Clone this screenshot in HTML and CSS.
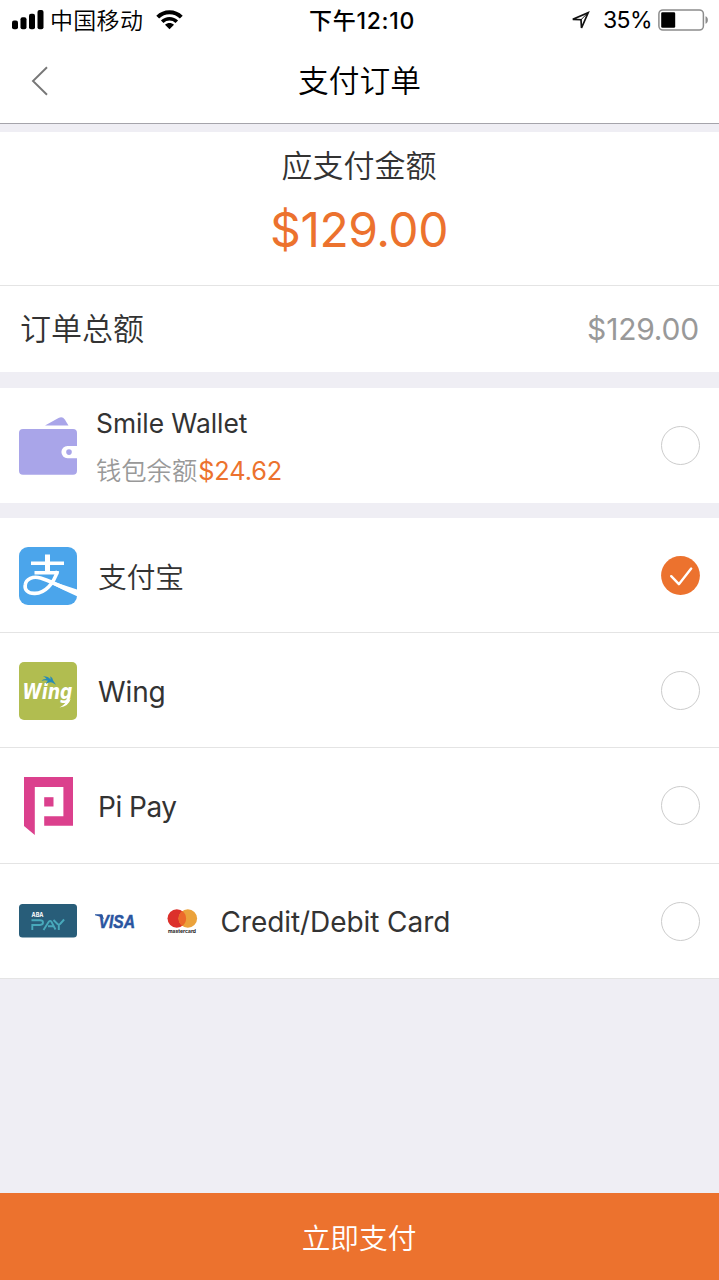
FILE: index.html
```html
<!DOCTYPE html>
<html lang="zh-CN">
<head>
<meta charset="utf-8">
<title>支付订单</title>
<link rel="stylesheet" href="styles.css">
</head>
<body>
<div class="screen">
  <header class="header">
    <div class="status">
      <div class="status-left">
        <svg class="signal" width="33" height="20" viewBox="0 0 33 20"><rect x="0" y="10.5" width="6" height="8.8" rx="2"/><rect x="8.5" y="7.2" width="6" height="12.1" rx="2"/><rect x="17" y="3.7" width="6" height="15.6" rx="2"/><rect x="25.5" y="0" width="6" height="19.3" rx="2"/></svg>
        <span class="carrier">中国移动</span>
        <svg class="wifi" width="27" height="20" viewBox="0 0 27 20"><path d="M1.7 7.1C8.3.5 18.7.5 25.3 7.1" fill="none" stroke="#000" stroke-width="4"/><path d="M6.2 11.7c4.1-4 10.5-4 14.6 0" fill="none" stroke="#000" stroke-width="3.6"/><path d="M13.5 19.2 9 14.7c2.5-2.4 6.5-2.4 9 0z"/></svg>
      </div>
      <span class="time">下午12:10</span>
      <div class="status-right">
        <svg width="19" height="19" viewBox="0 0 19 19"><path d="M1.8 8.3 17.2 1.6 10.5 17 10 8.7Z" fill="none" stroke="#111" stroke-width="1.7"/><path d="M10 8.7 17.2 1.6" stroke="#111" stroke-width="1"/></svg>
        <span class="percent">35%</span>
        <svg class="battery" width="51" height="22" viewBox="0 0 51 22"><rect x=".9" y=".9" width="44.5" height="20.2" rx="4" fill="none" stroke="#8c8c8c" stroke-width="1.5"/><rect x="3.2" y="3.2" width="14" height="15.5" rx="1.3"/><path d="M47.5 7.2c3.2 1.2 3.2 6.4 0 7.6z" fill="#8c8c8c"/></svg>
      </div>
    </div>
    <nav class="nav">
      <svg class="back" width="18" height="30" viewBox="0 0 18 30"><path d="M16 1.2 2 15l14 13.8" fill="none" stroke="#777" stroke-width="1.9"/></svg>
      <h1 class="title">支付订单</h1>
      <span></span>
    </nav>
  </header>

  <section class="due">
    <div class="due-label">应支付金额</div>
    <div class="due-amount">$129.00</div>
  </section>
  <section class="total">
    <span class="total-label">订单总额</span>
    <span class="total-amount">$129.00</span>
  </section>

  <section class="wallet">
    <svg width="58" height="58" viewBox="0 0 58 58"><path d="M26 8.500 39.500 1.100q4-2 6.300 1.500L49.500 8.500z" fill="#a9a5e9"/><path d="M4 12h50q4 0 4 4v13H48.500a6 6 0 0 0 0 12.200H58V53.700q0 4-4 4H4q-4 0-4-4V16q0-4 4-4z" fill="#a9a5e9"/><circle cx="50" cy="35.100" r="2.800" fill="#a9a5e9"/></svg>
    <div class="wallet-text">
      <div class="wallet-name">Smile Wallet</div>
      <div class="wallet-balance"><span class="balance-label">钱包余额</span><span class="balance">$24.62</span></div>
    </div>
    <span class="radio"></span>
  </section>

  <section class="methods">
    <div class="method">
      <svg width="58" height="58" viewBox="0 0 58 58"><rect width="58" height="58" rx="9" fill="#4ba5eb"/><path d="M12 16.2h33M15.5 25.8h24" fill="none" stroke="#fff" stroke-width="3.6"/><path d="M28.5 7.5v18" stroke="#fff" stroke-width="5"/><path d="M38.500 24C34.500 37 26 46 16 46.400C8.500 46.700 5.500 42.500 6.200 38C7 31.500 14 29 21.500 31C32 34 43 41 58 45.600" fill="none" stroke="#fff" stroke-width="3.600"/><path d="M33 34.200 58 42.500v6.800Q44 43 31.500 36.500z" fill="#fff"/></svg>
      <span class="name name-zh">支付宝</span>
      <svg class="check" width="39" height="39" viewBox="0 0 39 39"><circle cx="19.5" cy="19.5" r="19.4" fill="#ec722e"/><path d="m10.2 20.2 7.7 8L30.2 12.6" fill="none" stroke="#fff" stroke-width="2.4" stroke-linecap="round" stroke-linejoin="round"/></svg>
    </div>
    <div class="method">
      <svg width="58" height="58" viewBox="0 0 58 58"><rect width="58" height="58" rx="5" fill="#b1bd50"/><text class="wing-logo" x="3.5" y="36.5" textLength="50" lengthAdjust="spacingAndGlyphs">Wing</text><path d="M51.500 37q-1.500 7-11 8.500 5.500-3 6.500-6z" fill="#fff"/><path d="M24 14.200q5-.2 7.500 3.300l-.2-3.300q3 1.800 3 4.600l2.700 4-4-2.300q-3-.8-6 1.500.3-2.300 2-3.300-3.500-.8-6.500.3 1.500-2.500 5-2-1.500-2-3.500-2.800z" fill="#288ab5"/></svg>
      <span class="name name-wing">Wing</span>
      <span class="radio"></span>
    </div>
    <div class="method">
      <svg width="58" height="58" viewBox="0 0 58 58"><path d="M5 0h49v48.800H25.200V39.200H44.400V10H15.800V58L5 49z" fill="#db408d"/><rect x="25.200" y="20.200" width="9.300" height="9.300" fill="#db408d"/></svg>
      <span class="name name-pi">Pi Pay</span>
      <span class="radio"></span>
    </div>
    <div class="method">
      <svg width="58" height="34" viewBox="0 0 58 34"><rect width="58" height="33.500" rx="3.500" fill="#285d79"/><text class="aba" x="12.500" y="13.200" textLength="12" lengthAdjust="spacingAndGlyphs">ABA</text><g fill="none" stroke="#48a9bb" stroke-width="1.900"><path d="M12.500 16.300H21q3 0 3 2.300t-3 2.400h-7.700v5"/><path d="m24.500 26 5.400-8.400q1.200-1.500 2.400 0L36.500 25.500M29 22.200h6M34.500 16l4 4q1.300 1 2.600 0l4-4.500M39.800 21v5"/></g></svg>
      <svg class="visa" width="44" height="24" viewBox="0 0 44 24"><text class="visa-text" x="3.500" y="18.500" textLength="36.500" lengthAdjust="spacingAndGlyphs">VISA</text><path d="M0 5.200h7l2 5Q4.500 6.500 0 6.200z" fill="#2a55a0"/></svg>
      <svg class="mastercard" width="31" height="25" viewBox="0 0 31 25"><circle cx="9.800" cy="9.500" r="9.300" fill="#dc302b"/><circle cx="20.800" cy="9.500" r="9.300" fill="#eba23b"/><path d="M15.300 2a9.300 9.300 0 0 1 0 15 9.300 9.300 0 0 1 0-15z" fill="#ec692a"/><text class="mc-text" x="1" y="23.700" textLength="28">mastercard</text></svg>
      <span class="name name-card">Credit/Debit Card</span>
      <span class="radio"></span>
    </div>
  </section>
  <button class="pay" type="button">立即支付</button>
</div>
</body>
</html>
```
FILE: styles.css
```css
* { box-sizing: border-box; }
body {
  margin: 0;
  background: #efeef4;
  color: #333;
  font-family: Inter, "Noto Sans CJK SC", sans-serif;
}
svg { display: block; flex: none; overflow: visible; }
.screen { width: 719px; height: 1280px; display: flex; flex-direction: column; overflow: hidden; }
.header { height: 124px; background: #fff; border-bottom: 1px solid #a5a4ab; margin-bottom: 8px; color: #000; }
.status { height: 40px; display: grid; grid-template-columns: 309px 1fr auto; align-items: center; padding: 0 10px 0 0; white-space: nowrap; }
.status-left { display: flex; align-items: center; padding-left: 12px; }
.carrier { margin-left: 5px; padding-top: 1px; font-size: 23px; line-height: 30px; letter-spacing: .3px; font-weight: 350; }
.wifi { margin-left: 13px; }
.time { padding-top: 1px; font-size: 23px; line-height: 30px; font-weight: 500; letter-spacing: .7px; }
.status-right { display: flex; align-items: center; }
.percent { margin-left: 13px; font-size: 23px; line-height: 30px; letter-spacing: -.6px; }
.battery { margin-left: 6px; }
.nav { height: 82px; display: grid; grid-template-columns: 60px 1fr 60px; align-items: center; }
.back { margin-left: 31px; }
.title { margin: 0; font-size: 30.7px; line-height: 40px; font-weight: 350; text-align: center; }
.due { height: 154px; background: #fff; border-bottom: 1px solid #e4e4e4; text-align: center; padding-top: 14px; }
.due-label { font-size: 31px; line-height: 40px; font-weight: 350; padding-right: 1px; }
.due-amount { margin-top: 14px; padding-right: 1px; font-size: 48px; line-height: 60px; letter-spacing: -.5px; color: #ec722e; }
.total { height: 86px; background: #fff; display: flex; align-items: center; justify-content: space-between; padding: 0 20px; margin-bottom: 16px; }
.total-label { font-size: 31px; line-height: 40px; font-weight: 350; }
.total-amount { font-size: 30px; letter-spacing: -.2px; color: #999; }
.wallet { height: 115px; background: #fff; display: flex; align-items: center; padding: 0 19px; margin-bottom: 15px; }
.wallet-text { margin-left: 19px; padding-top: 2px; }
.wallet-name { font-size: 26.4px; line-height: 36px; letter-spacing: -.05px; }
.wallet-balance { display: flex; margin-top: 12px; font-size: 25.3px; line-height: 36px; color: #999; }
.balance-label { font-weight: 350; }
.balance { margin-left: 1px; color: #ec722e; letter-spacing: -.1px; }
.radio { width: 39px; height: 39px; margin-left: auto; border: 1.5px solid #ccc; border-radius: 50%; flex: none; }
.method { height: 115.2px; background: #fff; border-bottom: 1px solid #e4e4e4; display: flex; align-items: center; padding: 1px 19px 0; }
.name { margin-left: 21px; font-size: 28px; line-height: 40px; white-space: nowrap; padding-top: 3px; }
.name-zh { font-size: 28.7px; font-weight: 350; padding-top: 4px; }
.name-wing { letter-spacing: -.1px; }
.name-pi { letter-spacing: -.5px; }
.name-card { margin-left: 22.5px; padding-top: 2px; letter-spacing: -.07px; }
.check { margin-left: auto; }
.visa { margin-left: 18px; }
.mastercard { margin-left: 28px; }
.wing-logo { font: italic 700 20.5px "DejaVu Sans", sans-serif; fill: #fff; }
.aba { font: 700 5.5px Inter, sans-serif; fill: #fff; }
.visa-text { font: italic 700 18.5px "Liberation Sans", sans-serif; fill: #2a55a0; stroke: #2a55a0; stroke-width: .5px; }
.mc-text { font: 700 5px Inter, sans-serif; fill: #222; }
.pay { height: 87px; margin-top: auto; border: 0; padding: 4px 1px 0 0; background: #ec722e; color: #fff; font: inherit; font-size: 28.7px; line-height: 40px; font-weight: 350; }
```
